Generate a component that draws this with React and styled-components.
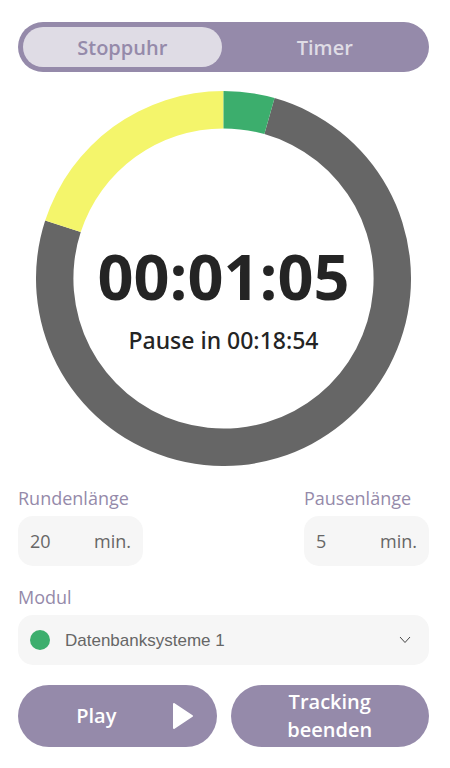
import React, { useState } from "react";
import styled, { createGlobalStyle } from "styled-components";

const colors = {
  purple: "#958aaa",
  lilac: "#dfdce5",
  field: "#f6f6f6",
  text: "#666666",
  dark: "#242424",
  green: "#3cae6d",
  yellow: "#f4f56b",
};

const GlobalStyle = createGlobalStyle`
  *, *::before, *::after { box-sizing: border-box; }
  body {
    margin: 0;
    background: #ffffff;
    font-family: "Open Sans", "Noto Sans", sans-serif;
  }
`;

const Page = styled.main`
  display: flex;
  flex-direction: column;
  padding: 22px 21px 20px 18px;
`;

const Switcher = styled.div`
  display: grid;
  grid-template-columns: 1fr 1fr;
  gap: 4px;
  height: 50px;
  padding: 5px;
  border-radius: 25px;
  background: ${colors.purple};
`;

const Tab = styled.button`
  border: 0;
  padding: 2px 0 0;
  border-radius: 20px;
  background: ${(p) => (p.$active ? colors.lilac : "transparent")};
  color: ${(p) => (p.$active ? colors.purple : colors.lilac)};
  font: 600 20px/28px "Open Sans", sans-serif;
  cursor: pointer;
`;

const Dial = styled.section`
  display: grid;
  place-items: center;
  margin: 19px 18px 0;
`;

const Ring = styled.svg`
  grid-area: 1 / 1;
  display: block;
  width: 100%;
  height: auto;
`;

const Readout = styled.div`
  grid-area: 1 / 1;
  display: flex;
  flex-direction: column;
  align-items: center;
  color: ${colors.dark};
  padding-top: 36px;
`;

const Time = styled.div`
  font-size: 63px;
  font-weight: 700;
  line-height: 76px;
`;

const NextBreak = styled.div`
  font-family: "Noto Sans", "Open Sans", sans-serif;
  font-size: 23px;
  font-weight: 500;
  line-height: 32px;
  margin-top: 10px;
`;

const FieldRow = styled.div`
  display: flex;
  justify-content: space-between;
  margin-top: 20px;
`;

const Field = styled.div`
  display: flex;
  flex-direction: column;
  margin-top: ${(p) => (p.$spaced ? "19px" : "0")};
`;

const Label = styled.label`
  color: ${colors.purple};
  font-size: 18px;
  line-height: 24px;
  margin-bottom: 6px;
`;

const Box = styled.div`
  display: flex;
  align-items: center;
  height: 50px;
  width: ${(p) => (p.$wide ? "100%" : "125px")};
  padding: 0 12px;
  border-radius: 15px;
  background: ${colors.field};
  color: ${colors.text};
  font-size: 18px;
`;

const MinutesInput = styled.input`
  flex: 1;
  min-width: 0;
  border: 0;
  padding: 0;
  background: transparent;
  color: inherit;
  font: inherit;
`;

const Dot = styled.span`
  width: 20px;
  height: 20px;
  border-radius: 50%;
  background: ${colors.green};
`;

const ModuleSelect = styled.select`
  flex: 1;
  min-width: 0;
  appearance: none;
  border: 0;
  padding: 0 0 0 15px;
  background: transparent;
  color: inherit;
  font: 17px "Liberation Sans", Arial, sans-serif;
`;

const Chevron = styled.svg`
  width: 12px;
  height: 12px;
  margin-right: 6px;
`;

const Actions = styled.div`
  display: grid;
  grid-template-columns: 1fr 1fr;
  gap: 14px;
  margin-top: 20px;
`;

const Action = styled.button`
  display: flex;
  align-items: center;
  justify-content: center;
  gap: 22px;
  min-height: 62px;
  border: 0;
  padding: 2px 24px;
  border-radius: 31px;
  background: ${colors.purple};
  color: #ffffff;
  font: 600 20px/28px "Open Sans", sans-serif;
  cursor: pointer;
`;

const ActionText = styled.span`
  flex: 1;
`;

const PlayIcon = styled.svg`
  width: 20px;
  height: 26px;
`;

const CENTER = 188;
const OUTER = 188;
const INNER = 150.5;

function point(radius, degrees) {
  const a = (degrees * Math.PI) / 180;
  return `${CENTER + radius * Math.sin(a)} ${CENTER - radius * Math.cos(a)}`;
}

function segment(from, to) {
  const large = to - from > 180 ? 1 : 0;
  return `M${point(OUTER, from)} A${OUTER} ${OUTER} 0 ${large} 1 ${point(OUTER, to)} L${point(INNER, to)} A${INNER} ${INNER} 0 ${large} 0 ${point(INNER, from)}Z`;
}

export default function App() {
  const [mode, setMode] = useState("Stoppuhr");
  return (
    <>
      <GlobalStyle />
      <Page>
        <Switcher>
          {["Stoppuhr", "Timer"].map((name) => (
            <Tab
              key={name}
              type="button"
              $active={mode === name}
              aria-pressed={mode === name}
              onClick={() => setMode(name)}
            >
              {name}
            </Tab>
          ))}
        </Switcher>

        <Dial>
          <Ring viewBox="0 0 376 376" aria-hidden="true">
            <path d={segment(15.8, 288)} fill={colors.text} />
            <path d={segment(288, 360)} fill={colors.yellow} />
            <path d={segment(0, 15.8)} fill={colors.green} />
          </Ring>
          <Readout>
            <Time>00:01:05</Time>
            <NextBreak>Pause in 00:18:54</NextBreak>
          </Readout>
        </Dial>

        <FieldRow>
          <Field>
            <Label htmlFor="round">Rundenlänge</Label>
            <Box>
              <MinutesInput id="round" type="text" inputMode="numeric" defaultValue="20" />
              <span>min.</span>
            </Box>
          </Field>
          <Field>
            <Label htmlFor="pause">Pausenlänge</Label>
            <Box>
              <MinutesInput id="pause" type="text" inputMode="numeric" defaultValue="5" />
              <span>min.</span>
            </Box>
          </Field>
        </FieldRow>

        <Field $spaced>
          <Label htmlFor="module">Modul</Label>
          <Box $wide>
            <Dot />
            <ModuleSelect id="module">
              <option>Datenbanksysteme 1</option>
            </ModuleSelect>
            <Chevron viewBox="0 0 12 12" fill="none" stroke="#444444" aria-hidden="true">
              <path d="M1 3 6 8.5 11 3" />
            </Chevron>
          </Box>
        </Field>

        <Actions>
          <Action type="button">
            <ActionText>Play</ActionText>
            <PlayIcon viewBox="0 0 20 26" aria-hidden="true">
              <path
                d="M1 1V25L19 13Z"
                fill="#ffffff"
                stroke="#ffffff"
                strokeWidth="2"
                strokeLinejoin="round"
              />
            </PlayIcon>
          </Action>
          <Action type="button">
            <ActionText>Tracking beenden</ActionText>
          </Action>
        </Actions>
      </Page>
    </>
  );
}
